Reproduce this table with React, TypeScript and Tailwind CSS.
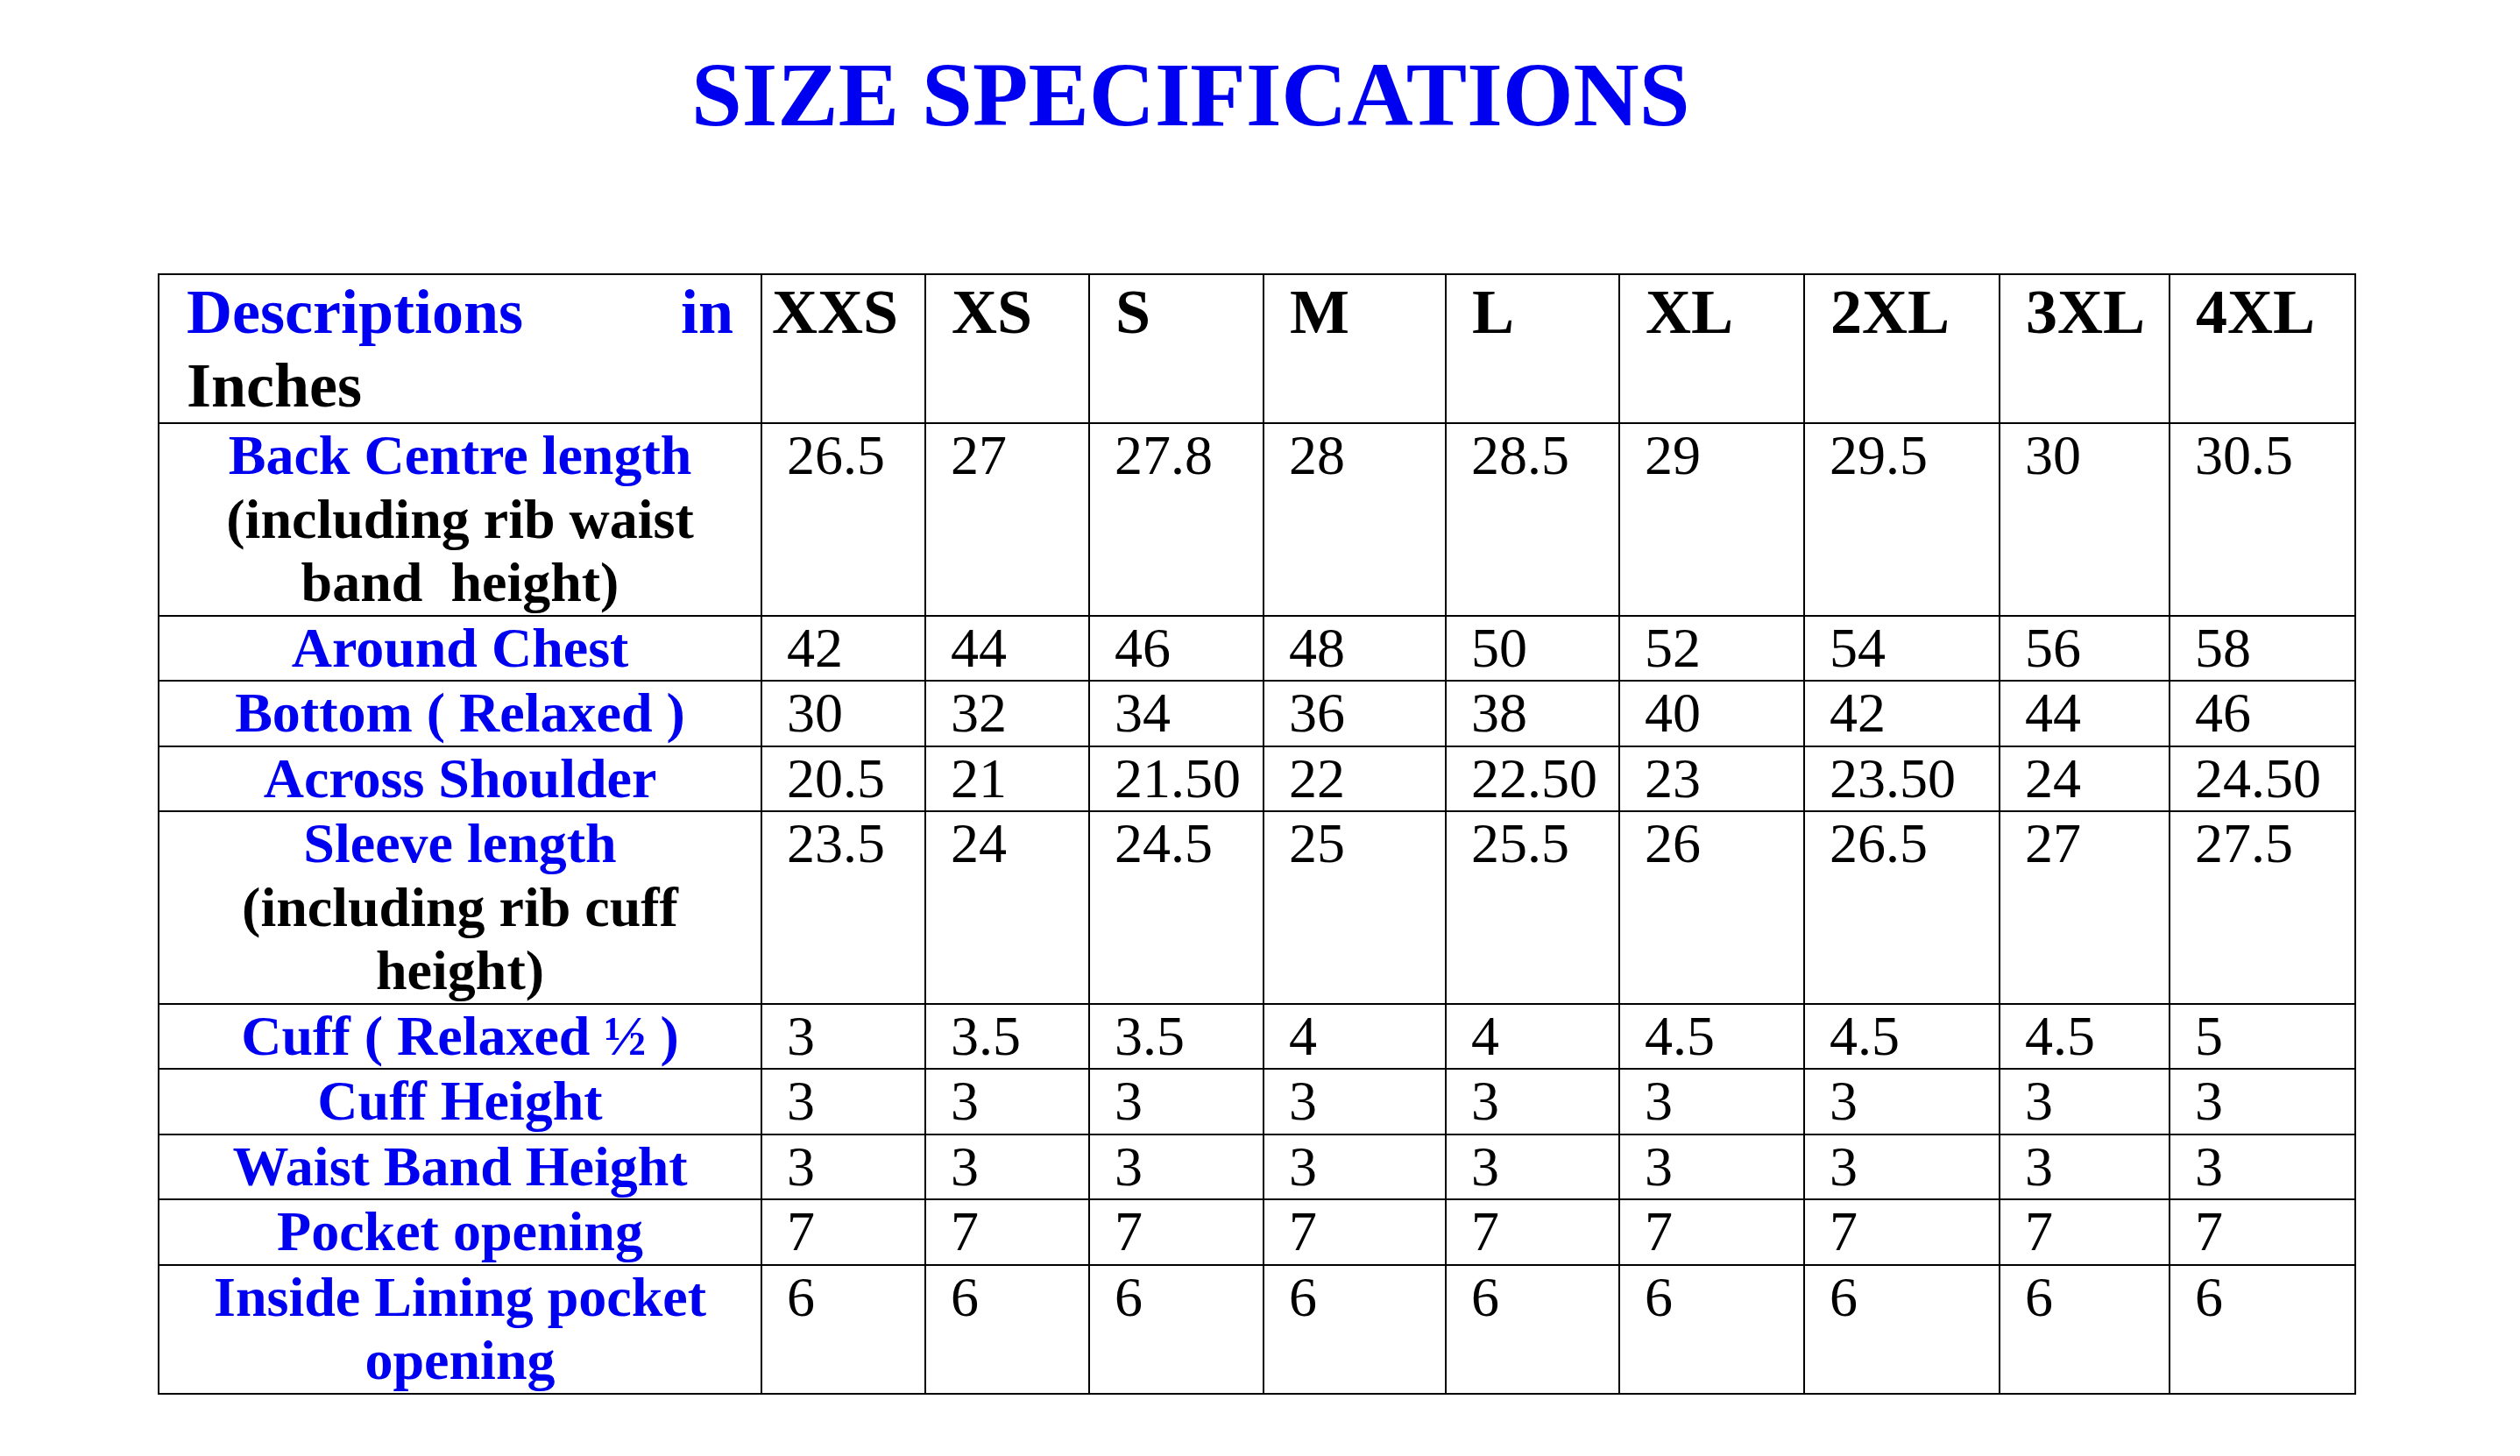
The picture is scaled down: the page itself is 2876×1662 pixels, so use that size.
const sizes = ["XXS", "XS", "S", "M", "L", "XL", "2XL", "3XL", "4XL"];

type Line = { text: string; blue: boolean };

type Row = {
  label: Line[];
  values: string[];
};

const b = (text: string): Line => ({ text, blue: true });
const k = (text: string): Line => ({ text, blue: false });

const rows: Row[] = [
  {
    label: [b("Back Centre length"), k("(including rib waist"), k("band  height)")],
    values: ["26.5", "27", "27.8", "28", "28.5", "29", "29.5", "30", "30.5"],
  },
  {
    label: [b("Around Chest")],
    values: ["42", "44", "46", "48", "50", "52", "54", "56", "58"],
  },
  {
    label: [b("Bottom ( Relaxed )")],
    values: ["30", "32", "34", "36", "38", "40", "42", "44", "46"],
  },
  {
    label: [b("Across Shoulder")],
    values: ["20.5", "21", "21.50", "22", "22.50", "23", "23.50", "24", "24.50"],
  },
  {
    label: [b("Sleeve length"), k("(including rib cuff"), k("height)")],
    values: ["23.5", "24", "24.5", "25", "25.5", "26", "26.5", "27", "27.5"],
  },
  {
    label: [b("Cuff ( Relaxed ½ )")],
    values: ["3", "3.5", "3.5", "4", "4", "4.5", "4.5", "4.5", "5"],
  },
  {
    label: [b("Cuff Height")],
    values: ["3", "3", "3", "3", "3", "3", "3", "3", "3"],
  },
  {
    label: [b("Waist Band Height")],
    values: ["3", "3", "3", "3", "3", "3", "3", "3", "3"],
  },
  {
    label: [b("Pocket opening")],
    values: ["7", "7", "7", "7", "7", "7", "7", "7", "7"],
  },
  {
    label: [b("Inside Lining pocket"), b("opening")],
    values: ["6", "6", "6", "6", "6", "6", "6", "6", "6"],
  },
];

export default function App() {
  return (
    <div className="min-h-screen bg-white text-black font-['Liberation_Serif','Times_New_Roman',serif]">
      <h1 className="pt-[56px] pl-[789px] text-[104px] leading-[104px] font-bold text-[#0000f0] whitespace-nowrap">
        SIZE SPECIFICATIONS
      </h1>

      <table className="mt-[152px] ml-[180px] w-[2507px] table-fixed border-collapse">
        <colgroup>
          <col className="w-[688px]" />
          <col className="w-[187px]" />
          <col className="w-[187px]" />
          <col className="w-[199px]" />
          <col className="w-[208px]" />
          <col className="w-[198px]" />
          <col className="w-[211px]" />
          <col className="w-[223px]" />
          <col className="w-[194px]" />
          <col className="w-[212px]" />
        </colgroup>
        <thead>
          <tr className="text-[72px] leading-[84px] font-bold">
            <th className="border-2 border-black px-[31px] align-top text-left font-bold">
              <div className="flex justify-between text-[#0000f0]">
                <span>Descriptions</span>
                <span>in</span>
              </div>
              <div>Inches</div>
            </th>
            {sizes.map((s, i) => (
              <th
                key={s}
                className={`border-2 border-black align-top text-left font-bold whitespace-nowrap ${
                  i === 0 ? "pl-[11px]" : "pl-[29px]"
                }`}
              >
                {s}
              </th>
            ))}
          </tr>
        </thead>
        <tbody>
          {rows.map((row) => (
            <tr key={row.label[0].text} className="text-[64px] leading-[72.5px]">
              <td className="border-2 border-black px-[20px] align-top text-center font-bold">
                {row.label.map((line) => (
                  <div
                    key={line.text}
                    className={`whitespace-pre ${line.blue ? "text-[#0000f0]" : "text-black"}`}
                  >
                    {line.text}
                  </div>
                ))}
              </td>
              {row.values.map((v, i) => (
                <td
                  key={i}
                  className="border-2 border-black pl-[28px] align-top text-left whitespace-nowrap"
                >
                  {v}
                </td>
              ))}
            </tr>
          ))}
        </tbody>
      </table>
    </div>
  );
}
